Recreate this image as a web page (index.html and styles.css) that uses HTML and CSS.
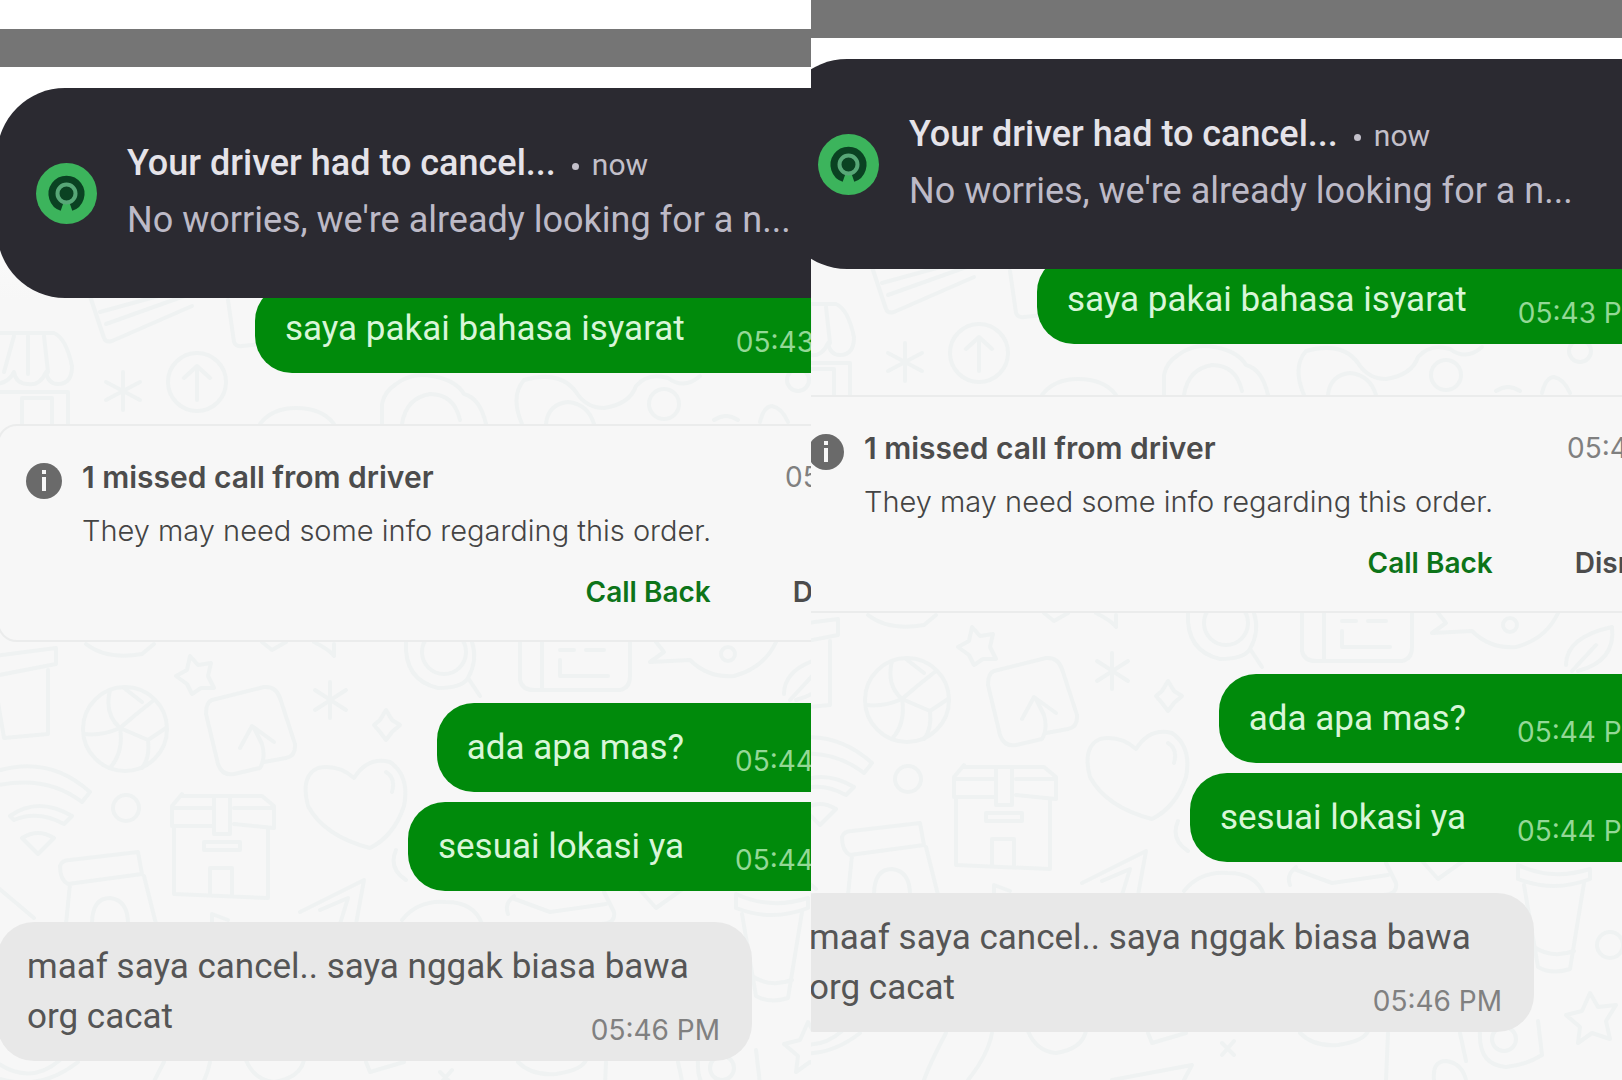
FILE: index.html
```
<!DOCTYPE html>
<html lang="id">
  <head>
    <meta charset="UTF-8">
    <meta name="viewport" content="width=device-width, initial-scale=1.0">
    <title>Driver Chat</title>
    <link rel="stylesheet" href="styles.css">
  </head>
  <body>
    <!-- First copy of the chat -->
    <section class="pane pane-left">
        <div class="screen">
            <svg class="wallpaper" viewBox="-3 29 948 1080" aria-hidden="true">
                <g id="doodles">
                    <!-- around the first message -->
                    <path d="M90 296L104 338Q106 343 112 341L192 306M100 312L180 290M106 324L190 294"/>
                    <path d="M228 300L234 342Q236 347 242 346L262 344"/>
                    <path d="M-6 333H54Q66 338 72 366Q72 384 58 384Q48 384 46 372Q40 386 28 384Q16 384 14 372Q8 384 -6 384M14 336L4 372M28 336V374M44 336L48 372M0 392H68V424M22 424V398H52V424"/>
                    <path d="M123 372V410M106 382L140 400M140 382L106 400"/>
                    <circle cx="197" cy="382" r="29"/>
                    <path d="M197 400V366M184 378L197 366L210 378"/>
                    <path d="M260 424Q272 408 296 408Q322 408 334 424M382 424V404Q384 392 396 384Q412 372 432 376Q456 380 464 394Q480 398 486 424M402 424Q406 398 430 394Q454 394 460 420"/>
                    <path d="M522 424Q510 396 524 380Q560 370 576 392Q586 408 604 408Q630 404 636 386Q648 372 668 378Q684 390 700 376M546 424Q548 404 568 402Q588 404 594 424"/>
                    <circle cx="664" cy="404" r="15"/>
                    <circle cx="798" cy="380" r="11"/>
                    <path d="M714 420Q726 412 738 420M760 422Q764 406 772 406Q782 408 788 422"/>
                    <!-- between the card and the replies -->
                    <path d="M-6 656L56 648V664L-6 676M48 670V734L4 738L-4 690M86 644Q106 660 142 654L154 644M262 642L272 650L286 642M314 642Q330 650 334 656L334 644"/>
                    <path d="M190 656L198 665L211 663L208 676L214 688L201 688L192 694L187 684L176 676L187 670Z"/>
                    <circle cx="125" cy="729" r="42"/>
                    <path d="M110 690Q104 714 120 728Q136 714 154 700M84 734Q102 736 120 728Q124 752 110 768M120 728L148 740L166 728M148 740Q150 758 142 768M124 688L142 702"/>
                    <path d="M212 700L264 687Q276 686 280 698L295 744Q296 756 286 758L264 762M206 714Q206 702 212 700M206 714L218 764Q222 776 234 774L260 768Q266 758 262 744L254 728M240 748L252 726L274 742"/>
                    <path d="M330 682V718M315 690L346 710M346 690L315 710"/>
                    <path d="M386 710L392 720L400 725L392 732L386 740L380 732L374 725L380 720Z"/>
                    <circle cx="444" cy="652" r="22"/>
                    <path d="M406 642Q404 680 438 688Q462 688 468 678L480 696M472 642Q478 660 468 678"/>
                    <path d="M520 642V680Q522 690 534 690H620Q630 688 630 676V642M542 642V690M560 650H574M586 650H604M560 660V676H608"/>
                    <path d="M656 642L664 652L650 662L690 660Q708 678 734 676Q764 668 776 642"/>
                    <circle cx="728" cy="654" r="7"/>
                    <path d="M784 694Q784 666 830 656Q834 690 796 700M790 700L814 674"/>
                    <path d="M-6 772Q48 754 90 792L82 802Q46 774 -6 786M10 816Q38 796 72 816L64 824Q38 810 14 820ZM22 838Q38 828 54 838L38 854Z"/>
                    <circle cx="126" cy="808" r="13"/>
                    <path d="M182 794L172 806V826L214 826M234 824L274 828V806L262 796H182M172 808H214M234 808H274M214 796V834H230V796M174 828V894L268 898L268 828M204 842H240V850H204ZM210 894V868H232V896"/>
                    <path d="M354 778Q368 756 390 762Q410 776 404 806Q394 836 370 848Q324 836 308 806Q300 776 318 768Q338 764 354 778ZM386 772Q396 778 392 792"/>
                    <!-- behind the last message -->
                    <path d="M60 866Q62 860 70 860L138 852L142 874L68 884Q60 880 60 866ZM70 884L66 924M144 876L156 924M92 924Q92 898 110 898Q128 900 128 924M-4 886L34 918"/>
                    <path d="M300 912L364 880L356 924M320 910L348 898L340 924M212 924V914L228 920"/>
                    <path d="M396 850Q388 868 406 880M402 920Q418 900 446 902Q474 902 482 924M508 914Q504 904 514 896M512 898L550 912L606 904M604 892L614 912Q616 924 600 924M640 890L656 908L684 888"/>
                    <path d="M736 894Q770 910 808 898L808 908Q772 922 736 908ZM742 914L756 996Q770 1004 788 998L802 912M752 976Q770 988 792 980"/>
                    <path d="M164 1062Q148 1092 142 1109M210 1062Q206 1084 186 1109M-4 1062Q30 1086 60 1060M-4 1078Q40 1092 78 1062M246 1060Q254 1080 274 1082Q300 1078 304 1060M366 1062L370 1072L404 1062M330 1109L410 1094L402 1109"/>
                    <path d="M518 1062Q532 1076 556 1074Q582 1070 586 1060M604 1109L606 1062M652 1109Q650 1090 664 1090Q680 1092 684 1109M678 1062L684 1090M440 1072L452 1084M452 1070L440 1084"/>
                    <circle cx="722" cy="1068" r="12"/>
                    <path d="M698 1060Q696 1094 724 1096Q744 1094 760 1084L756 1050M698 1060"/>
                    <path d="M808 1022L816 1036L834 1034L824 1050L828 1068L810 1062L796 1072L798 1056L784 1044L800 1040Z"/>
                    <circle cx="828" cy="974" r="13"/>
                </g>
            </svg>
            <div class="status-bar"></div>
            <div class="notification">
                <svg class="app-icon" viewBox="0 0 61 61" aria-hidden="true">
                    <circle class="icon-face" cx="30.5" cy="30.5" r="30.5"/>
                    <path class="icon-ring" d="M26 44A14 14 0 1 1 35 44"/>
                    <path class="icon-stem" d="M30.5 40V46"/>
                    <circle class="icon-pin" cx="30.5" cy="30.5" r="9"/>
                </svg>
                <div class="notification-text">
                    <div class="notification-title">Your driver had to cancel...<span class="when"><span class="dot"></span>now</span></div>
                    <div class="notification-body">No worries, we're already looking for a n...</div>
                </div>
            </div>
            <div class="messages">
                <div class="bubble sent first"><p>saya pakai bahasa isyarat</p><time>05:43 PM</time></div>
                <div class="call-card">
                    <div class="card-head">
                        <svg class="info-icon" viewBox="0 0 36 36" aria-hidden="true">
                            <circle cx="18" cy="18" r="18"/>
                            <path d="M18 14V28M18 7V11"/>
                        </svg>
                        <div class="card-text">
                            <h2>1 missed call from driver</h2>
                            <p>They may need some info regarding this order.</p>
                        </div>
                        <time>05:44 PM</time>
                    </div>
                    <div class="card-actions">
                        <button type="button" class="call-back">Call Back</button>
                        <button type="button">Dismiss</button>
                    </div>
                </div>
                <div class="bubble sent"><p>ada apa mas?</p><time>05:44 PM</time></div>
                <div class="bubble sent"><p>sesuai lokasi ya</p><time>05:44 PM</time></div>
                <div class="bubble received"><p>maaf saya cancel.. saya nggak biasa bawa org cacat <time>05:46 PM</time></p></div>
            </div>
        </div>
    </section>

    <!-- Second copy, moved up and to the left -->
    <section class="pane pane-right">
        <div class="screen">
            <svg class="wallpaper" viewBox="-3 29 948 1080" aria-hidden="true">
                <use href="#doodles"/>
            </svg>
            <div class="status-bar"></div>
            <div class="notification">
                <svg class="app-icon" viewBox="0 0 61 61" aria-hidden="true">
                    <circle class="icon-face" cx="30.5" cy="30.5" r="30.5"/>
                    <path class="icon-ring" d="M26 44A14 14 0 1 1 35 44"/>
                    <path class="icon-stem" d="M30.5 40V46"/>
                    <circle class="icon-pin" cx="30.5" cy="30.5" r="9"/>
                </svg>
                <div class="notification-text">
                    <div class="notification-title">Your driver had to cancel...<span class="when"><span class="dot"></span>now</span></div>
                    <div class="notification-body">No worries, we're already looking for a n...</div>
                </div>
            </div>
            <div class="messages">
                <div class="bubble sent first"><p>saya pakai bahasa isyarat</p><time>05:43 PM</time></div>
                <div class="call-card">
                    <div class="card-head">
                        <svg class="info-icon" viewBox="0 0 36 36" aria-hidden="true">
                            <circle cx="18" cy="18" r="18"/>
                            <path d="M18 14V28M18 7V11"/>
                        </svg>
                        <div class="card-text">
                            <h2>1 missed call from driver</h2>
                            <p>They may need some info regarding this order.</p>
                        </div>
                        <time>05:44 PM</time>
                    </div>
                    <div class="card-actions">
                        <button type="button" class="call-back">Call Back</button>
                        <button type="button">Dismiss</button>
                    </div>
                </div>
                <div class="bubble sent"><p>ada apa mas?</p><time>05:44 PM</time></div>
                <div class="bubble sent"><p>sesuai lokasi ya</p><time>05:44 PM</time></div>
                <div class="bubble received"><p>maaf saya cancel.. saya nggak biasa bawa org cacat <time>05:46 PM</time></p></div>
            </div>
        </div>
    </section>
  </body>
</html>
```
FILE: styles.css
```
* {
    margin: 0;
    padding: 0;
    box-sizing: border-box;
}

body {
    font-family: Roboto, sans-serif;
    background: #fff;
    color: #555;
    height: 100vh;
    display: flex;
    overflow: hidden;
}

.pane {
    flex: 1;
    min-width: 0;
    overflow: hidden;
}

.pane-left {
    padding-top: 29px;
}

/* The screen runs past both sides of its pane */
.screen {
    position: relative;
    min-height: 100vh;
    margin: 0 -134px 0 -3px;
    background: linear-gradient(#fff 130px, #f7f7f7 270px);
}

.pane-right .screen {
    margin: 0 -105px 0 -32px;
}

.wallpaper {
    position: absolute;
    top: 0;
    left: 0;
    width: 948px;
    height: 1080px;
    fill: none;
    stroke: #eff2f2;
    stroke-width: 4;
    stroke-linecap: round;
    stroke-linejoin: round;
}

.status-bar {
    position: relative;
    height: 38px;
    background: #757575;
}

.notification {
    position: relative;
    z-index: 1;
    display: flex;
    align-items: center;
    gap: 30px;
    height: 210px;
    margin-top: 21px;
    padding-left: 39px;
    border-radius: 68px;
    background: #2b2a31;
    white-space: nowrap;
}

.app-icon {
    flex: none;
    width: 61px;
    height: 61px;
}

.icon-face { fill: #3cb45c; }

.icon-ring {
    fill: none;
    stroke: #0a4222;
    stroke-width: 8;
}

.icon-stem {
    stroke: #3cb45c;
    stroke-width: 4;
}

.icon-pin {
    fill: #0a4222;
    stroke: #57a777;
    stroke-width: 4;
}

.notification-text {
    line-height: 57px;
    padding-bottom: 3px;
}

.notification-title {
    font-size: 36px;
    font-weight: 500;
    color: #e5e3e9;
}

.when {
    margin-left: 16px;
    font-size: 30px;
    font-weight: 400;
    line-height: 30px;
    color: #c3c0ca;
}

.dot {
    display: inline-block;
    width: 7px;
    height: 7px;
    margin-right: 13px;
    border-radius: 50%;
    background: #c3c0ca;
    vertical-align: middle;
}

.notification-body {
    font-size: 36px;
    color: #bdbac7;
}

.messages {
    position: relative;
    display: flex;
    flex-direction: column;
}

.bubble {
    padding: 20px 32px 19px 30px;
    border-radius: 37px;
    font-size: 35px;
    line-height: 50px;
}

time {
    font-family: Inter, sans-serif;
    font-size: 28px;
    line-height: 24px;
    color: #808080;
    white-space: nowrap;
}

.sent {
    display: flex;
    align-items: flex-end;
    align-self: flex-end;
    gap: 51px;
    margin-bottom: 10px;
    padding-right: 80px;
    background: #008a0b;
    color: #d8f6d8;
}

.sent time {
    color: #94d896;
}

/* Slides under the notification */
.first {
    margin-top: -14px;
    margin-bottom: 51px;
}

.received {
    align-self: flex-start;
    max-width: 755px;
    margin-top: 21px;
    background: #e8e8e8;
    color: #555;
}

.received time {
    float: right;
    margin-top: 26px;
}

.call-card {
    margin-bottom: 61px;
    padding: 24px 28px 30px 27px;
    border: 2px solid #ebecec;
    border-radius: 20px;
    background: #f7f7f7;
    font-family: Inter, sans-serif;
}

.card-head {
    display: flex;
    gap: 20px;
    line-height: 54px;
}

.card-head time {
    margin-left: auto;
    line-height: 54px;
}

.info-icon {
    flex: none;
    width: 36px;
    height: 36px;
    margin-top: 13px;
    fill: #6a6a6a;
    stroke: #f7f7f7;
    stroke-width: 4;
}

.info-icon circle {
    stroke: none;
}

.card-text h2 {
    font-size: 30px;
    font-weight: 600;
    color: #4c4c4c;
}

.card-text p {
    font-size: 29px;
    font-weight: 300;
    color: #444;
}

.card-actions {
    display: flex;
    justify-content: flex-end;
    gap: 82px;
    margin-top: 16px;
    padding-right: 16px;
}

.card-actions button {
    border: none;
    background: none;
    font-family: inherit;
    font-size: 28px;
    font-weight: 600;
    line-height: 36px;
    color: #4c4c4c;
    cursor: pointer;
}

.card-actions .call-back {
    color: #0d7419;
}
```
